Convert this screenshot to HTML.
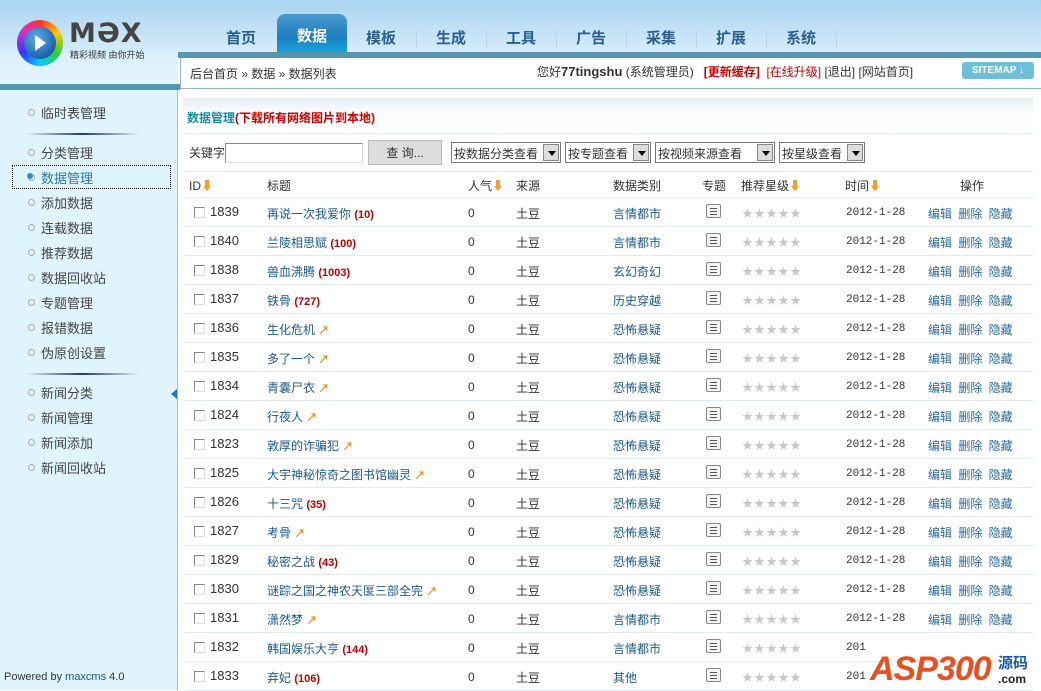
<!DOCTYPE html>
<html><head><meta charset="utf-8"><style>
*{margin:0;padding:0;box-sizing:border-box}
body{width:1041px;height:690px;overflow:hidden;font-family:"Liberation Sans","Noto Sans CJK SC",sans-serif;font-size:12px;color:#333;background:#fff;position:relative}
.abs{position:absolute}
#hdr{left:0;top:0;width:1041px;height:56px;background:linear-gradient(#a9d3f0,#d9eefb)}
#lhdr{left:0;top:52px;width:178px;height:34px;background:linear-gradient(#d9eefb,#e6f5fd)}
#bar1{left:178px;top:52px;width:863px;height:6px;background:#5597ae}
#bar2{left:0;top:84px;width:180px;height:6px;background:#5597ae}
#crumb{left:180px;top:58px;width:861px;height:31px;background:#fff;border-bottom:1px solid #8cb8c8;border-left:1px solid #8cb8c8}
.tab{position:absolute;top:27px;font-size:15px;font-weight:bold;color:#2a5f8a;width:70px;text-align:center}
.sep{position:absolute;top:30px;width:1px;height:18px;background:#b9d6e8}
#act{left:277px;top:14px;width:70px;height:38px;border-radius:8px 8px 0 0;background:linear-gradient(#4b9ad0,#1d7fc0 60%,#1aa2d8);color:#fff}
#side{left:0;top:90px;width:178px;height:600px;background:#dff4fc;border-right:1px solid #9cc3d4}
.si{position:absolute;left:41px;font-size:13px;color:#444}
.si:before{content:"";position:absolute;left:-13px;top:6px;width:5px;height:5px;border:1px solid #aaa;border-radius:50%}
.hr{position:absolute;left:25px;width:115px;height:2px;background:linear-gradient(90deg,transparent,#1d3a7a,transparent)}
#ttl{left:183px;top:98px;width:850px;height:35px;background:linear-gradient(#e3eef2,#fafcfd 40%,#fff)}
.row{position:absolute;left:185px;width:848px;height:29px;border-bottom:1px solid #e1ecf2}
.c{position:absolute;top:7px;white-space:nowrap}
.lk{color:#1c5a8a}
.n{color:#b00;font-weight:bold;font-size:11px}
.cb{position:absolute;left:9px;top:9px;width:11px;height:11px;border:1px solid #888;border-right-color:#ddd;border-bottom-color:#ddd;background:#fff}
.st{color:#c8c8c8;font-size:11px;letter-spacing:1px}
.ic{position:absolute;left:521px;top:6px;width:15px;height:14px;border:1px solid #888;border-radius:2px;background:#f4f4f4}
.ic i{position:absolute;left:3px;width:7px;height:1px;background:#555}
.sel{position:absolute;top:142px;height:21px;border:1px solid #777;background:#fff;font-size:12px;padding:2px 0 0 2px}
.sel b{position:absolute;right:1px;top:1px;width:16px;height:17px;background:#ddd;border:1px solid #888}
.sel b:after{content:"";position:absolute;left:4px;top:6px;border:4px solid transparent;border-top:5px solid #000}
.ar{color:#f0a030;font-weight:bold}
.up{color:#e08a20;font-weight:bold;font-size:11px}
</style></head><body>
<div id="hdr" class="abs"></div>
<div id="lhdr" class="abs"></div>
<div class="abs" style="left:17px;top:20px;width:46px;height:46px;border-radius:50%;background:conic-gradient(#f33,#fc0,#3c3,#0cf,#33f,#c3c,#f33)"></div>
<div class="abs" style="left:24px;top:27px;width:32px;height:32px;border-radius:50%;background:radial-gradient(circle at 40% 35%,#5ab0f0,#0a3e8a)"></div>
<div class="abs" style="left:35px;top:35px;border:8px solid transparent;border-left:11px solid #fff;border-right:0"></div>
<div class="abs" style="left:69px;top:20px;font-size:27px;font-weight:bold;color:#444;letter-spacing:1px;font-family:'DejaVu Sans',sans-serif;line-height:28px">MƏX</div>
<div class="abs" style="left:70px;top:48px;font-size:9px;color:#333">精彩视频 由你开始</div>
<div id="act" class="abs"></div>
<div class="tab" style="left:206px">首页</div>
<div class="tab" style="left:277px;top:25px;color:#fff">数据</div>
<div class="tab" style="left:346px">模板</div>
<div class="tab" style="left:416px">生成</div>
<div class="tab" style="left:486px">工具</div>
<div class="tab" style="left:556px">广告</div>
<div class="tab" style="left:626px">采集</div>
<div class="tab" style="left:696px">扩展</div>
<div class="tab" style="left:766px">系统</div>
<div class="sep" style="left:416px"></div><div class="sep" style="left:486px"></div><div class="sep" style="left:556px"></div><div class="sep" style="left:626px"></div><div class="sep" style="left:696px"></div><div class="sep" style="left:766px"></div><div class="sep" style="left:836px"></div>
<div id="bar1" class="abs"></div>
<div id="bar2" class="abs"></div>
<div id="crumb" class="abs"></div>
<div class="abs" style="left:190px;top:65px;font-size:12px;color:#333">后台首页 » 数据 » 数据列表</div>
<div class="abs" style="left:537px;top:63px;font-size:12px;color:#333">您好<b style="font-size:13px">77tingshu</b> (系统管理员) &nbsp; <b style="color:#c00">[更新缓存]</b> &nbsp;<span style="color:#c00">[在线升级]</span> [退出] [网站首页]</div>
<div class="abs" style="left:962px;top:62px;width:72px;height:17px;border-radius:3px;background:#6ec0d8;color:#fff;font-size:10px;font-weight:bold;text-align:center;line-height:17px">SITEMAP ↓</div>
<div id="side" class="abs"></div>
<div class="si" style="top:103px">临时表管理</div>
<div class="hr" style="top:133px"></div>
<div class="si" style="top:143px">分类管理</div>
<div class="abs" style="left:12px;top:165px;width:159px;height:24px;border:1px dotted #000"></div>
<div class="si" style="top:168px;color:#2a7ab0">数据管理</div>
<div class="abs" style="left:27px;top:173px;width:6px;height:6px;border-radius:50%;background:#3a8ac0"></div>
<div class="si" style="top:193px">添加数据</div>
<div class="si" style="top:218px">连载数据</div>
<div class="si" style="top:243px">推荐数据</div>
<div class="si" style="top:268px">数据回收站</div>
<div class="si" style="top:293px">专题管理</div>
<div class="si" style="top:318px">报错数据</div>
<div class="si" style="top:343px">伪原创设置</div>
<div class="hr" style="top:373px"></div>
<div class="si" style="top:383px">新闻分类</div>
<div class="si" style="top:408px">新闻管理</div>
<div class="si" style="top:433px">新闻添加</div>
<div class="si" style="top:458px">新闻回收站</div>
<div class="abs" style="left:171px;top:389px;border:5px solid transparent;border-right:6px solid #1a7ab8;border-left:0"></div>
<div class="abs" style="left:4px;top:671px;font-size:11px;color:#333">Powered by <span style="color:#1c5a8a">maxcms</span> 4.0</div>
<div id="ttl" class="abs"></div>
<div class="abs" style="left:187px;top:109px;font-size:12px;font-weight:bold;color:#1a8aa0">数据管理<span style="color:#c00">(下载所有网络图片到本地)</span></div>
<div class="abs" style="left:185px;top:133px;width:848px;height:1px;background:#e1ecf2"></div>
<div class="abs" style="left:189px;top:144px">关键字</div>
<div class="abs" style="left:225px;top:143px;width:138px;height:20px;border:1px solid #888;border-right-color:#ddd;border-bottom-color:#ddd"></div>
<div class="abs" style="left:368px;top:140px;width:74px;height:25px;background:#ddd;border:1px solid #bbb;text-align:center;line-height:24px">查 询...</div>
<div class="sel" style="left:451px;width:110px">按数据分类查看<b></b></div>
<div class="sel" style="left:565px;width:86px">按专题查看<b></b></div>
<div class="sel" style="left:655px;width:120px">按视频来源查看<b></b></div>
<div class="sel" style="left:779px;width:86px">按星级查看<b></b></div>
<div class="abs" style="left:185px;top:171px;width:848px;height:1px;background:#e1ecf2"></div>
<div class="row" style="top:171px;height:27px">
<span class="c" style="left:4px;top:6px">ID<span class="ar">⬇</span></span><span class="c" style="left:82px;top:6px">标题</span><span class="c" style="left:283px;top:6px">人气<span class="ar">⬇</span></span><span class="c" style="left:331px;top:6px">来源</span><span class="c" style="left:428px;top:6px">数据类别</span><span class="c" style="left:517px;top:6px">专题</span><span class="c" style="left:556px;top:6px">推荐星级<span class="ar">⬇</span></span><span class="c" style="left:660px;top:6px">时间<span class="ar">⬇</span></span><span class="c" style="left:775px;top:6px">操作</span></div>
<div id="rows"></div>
<script>
var d=[["1839","再说一次我爱你","(10)","言情都市"],["1840","兰陵相思赋","(100)","言情都市"],["1838","兽血沸腾","(1003)","玄幻奇幻"],["1837","铁骨","(727)","历史穿越"],["1836","生化危机","","恐怖悬疑"],["1835","多了一个","","恐怖悬疑"],["1834","青囊尸衣","","恐怖悬疑"],["1824","行夜人","","恐怖悬疑"],["1823","敦厚的诈骗犯","","恐怖悬疑"],["1825","大宇神秘惊奇之图书馆幽灵","","恐怖悬疑"],["1826","十三咒","(35)","恐怖悬疑"],["1827","考骨","","恐怖悬疑"],["1829","秘密之战","(43)","恐怖悬疑"],["1830","谜踪之国之神农天匽三部全完","","恐怖悬疑"],["1831","潇然梦","","言情都市"],["1832","韩国娱乐大亨","(144)","言情都市"],["1833","弃妃","(106)","其他"]];
var h="";
d.forEach(function(r,i){var t=198+i*29;var last=i>=15;
h+='<div class="row" style="top:'+t+'px"><div class="cb"></div><span class="c" style="left:25px;font-size:13px;top:6px">'+r[0]+'</span><span class="c lk" style="left:82px">'+r[1]+' '+(r[2]?'<span class="n">'+r[2]+'</span>':'<span class="up">↗</span>')+'</span><span class="c" style="left:283px;top:8px">0</span><span class="c" style="left:331px">土豆</span><span class="c lk" style="left:428px">'+r[3]+'</span><div class="ic"><i style="top:3px"></i><i style="top:6px"></i><i style="top:9px"></i></div><span class="c st" style="left:557px">★★★★★</span><span class="c" style="left:661px;top:9px;font-family:\'Liberation Mono\',monospace;font-size:11px">'+(last?'201':'2012-1-28')+'</span>'+(last?'':'<span class="c lk" style="left:743px;word-spacing:3px;color:#2a6a9a">编辑 删除 隐藏</span>')+'</div>';});
document.getElementById("rows").innerHTML=h;
</script>
<div class="abs" style="left:870px;top:650px;font-size:34px;font-weight:bold;font-style:italic;color:#e85020;letter-spacing:-1px;line-height:38px">ASP300</div>
<div class="abs" style="left:998px;top:652px;font-size:15px;font-weight:bold;color:#1a5aa8">源码</div>
<div class="abs" style="left:998px;top:672px;font-size:12px;font-weight:bold;color:#222">.com</div>
</body></html>
